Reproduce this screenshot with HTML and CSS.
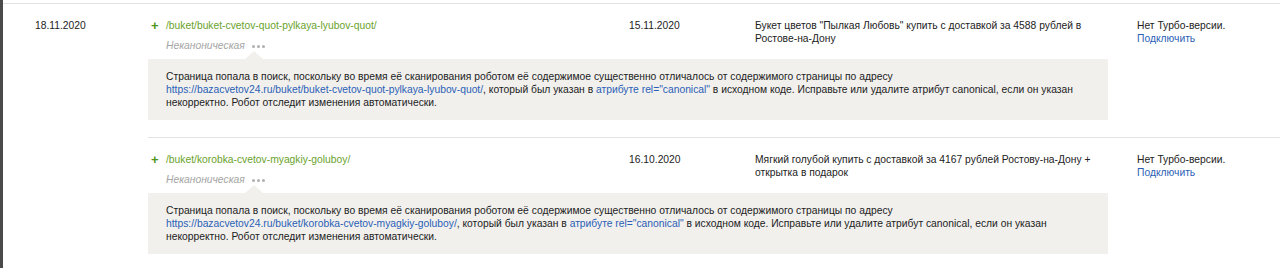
FILE: index.html
```html
<!DOCTYPE html>
<html lang="ru">
<head>
<meta charset="utf-8">
<link rel="stylesheet" href="styles.css">
</head>
<body>
<div class="frame">
  <div class="table">
    <div class="day">
      <div class="day-date">18.11.2020</div>
      <div class="day-items">
        <div class="item">
          <div class="item-main">
            <div class="cell-url">
              <div class="url-line"><span class="plus">+</span><span class="url">/buket/buket-cvetov-quot-pylkaya-lyubov-quot/</span></div>
              <div class="status"><span class="status-text">Неканоническая</span><span class="dots"><i></i><i></i><i></i></span></div>
            </div>
            <div class="cell-date">15.11.2020</div>
            <div class="cell-title">Букет цветов "Пылкая Любовь" купить с доставкой за 4588 рублей в Ростове-на-Дону</div>
            <div class="cell-turbo">Нет Турбо-версии.<br><a class="link" href="#">Подключить</a></div>
          </div>
          <div class="note">Страница попала в поиск, поскольку во время её сканирования роботом её содержимое существенно отличалось от содержимого страницы по адресу <a class="link nowrap" href="#">https://bazacvetov24.ru/buket/buket-cvetov-quot-pylkaya-lyubov-quot/</a>, который был указан в <a class="link" href="#">атрибуте rel="canonical"</a> в исходном коде. Исправьте или удалите атрибут canonical, если он указан некорректно. Робот отследит изменения автоматически.</div>
        </div>
        <div class="item item-next">
          <div class="item-main">
            <div class="cell-url">
              <div class="url-line"><span class="plus">+</span><span class="url">/buket/korobka-cvetov-myagkiy-goluboy/</span></div>
              <div class="status"><span class="status-text">Неканоническая</span><span class="dots"><i></i><i></i><i></i></span></div>
            </div>
            <div class="cell-date">16.10.2020</div>
            <div class="cell-title">Мягкий голубой купить с доставкой за 4167 рублей Ростову-на-Дону + открытка в подарок</div>
            <div class="cell-turbo">Нет Турбо-версии.<br><a class="link" href="#">Подключить</a></div>
          </div>
          <div class="note">Страница попала в поиск, поскольку во время её сканирования роботом её содержимое существенно отличалось от содержимого страницы по адресу <a class="link nowrap" href="#">https://bazacvetov24.ru/buket/korobka-cvetov-myagkiy-goluboy/</a>, который был указан в <a class="link" href="#">атрибуте rel="canonical"</a> в исходном коде. Исправьте или удалите атрибут canonical, если он указан некорректно. Робот отследит изменения автоматически.</div>
        </div>
      </div>
    </div>
  </div>
</div>
</body>
</html>
```
FILE: styles.css
```css
html, body {
  margin: 0;
  padding: 0;
  background: #fff;
}
body {
  font-family: "Liberation Sans", Arial, sans-serif;
  font-size: 10.3px;
  line-height: 13px;
  color: #222;
}
.frame {
  border-left: 3px solid #4a4a4a;
  padding-top: 3px;
  height: 265px;
  overflow: hidden;
}
.table {
  border-top: 1px solid #e3e3e3;
}
.day {
  display: flex;
}
.day-date {
  width: 145px;
  padding-left: 32px;
  padding-top: 15px;
  box-sizing: border-box;
  flex: none;
}
.day-items {
  flex: 1;
}
.item {
  padding-top: 15px;
  padding-bottom: 17px;
}
.item-next {
  border-top: 1px solid #e3e3e3;
}
.item-main {
  display: flex;
}
.cell-url {
  width: 481px;
  flex: none;
}
.url-line {
  display: flex;
  align-items: center;
}
.plus {
  width: 18px;
  padding-left: 3px;
  box-sizing: border-box;
  color: #4f9418;
  font-weight: bold;
  font-size: 13px;
}
.url {
  color: #6aa22c;
}
.status {
  display: flex;
  align-items: center;
  margin-top: 7px;
  padding-left: 18px;
  color: #a5a5a5;
  font-style: italic;
}
.dots {
  display: flex;
  gap: 2px;
  margin-left: 7px;
  margin-top: 2px;
}
.dots i {
  width: 3px;
  height: 3px;
  border-radius: 50%;
  background: #b0b0b0;
}
.cell-date {
  width: 126px;
  flex: none;
}
.cell-title {
  width: 352px;
  margin-right: 30px;
  flex: none;
}
.cell-turbo {
  flex: 1;
}
.link {
  color: #2b5fb6;
  text-decoration: none;
}
.nowrap {
  white-space: nowrap;
}
.note {
  position: relative;
  margin-top: 7px;
  width: 960px;
  box-sizing: border-box;
  background: #f1f0ed;
  padding: 11px 24px 11px 18px;
}
.note::before {
  content: "";
  position: absolute;
  left: 97px;
  top: -8px;
  border-left: 9px solid transparent;
  border-right: 9px solid transparent;
  border-bottom: 8px solid #f1f0ed;
}
```
